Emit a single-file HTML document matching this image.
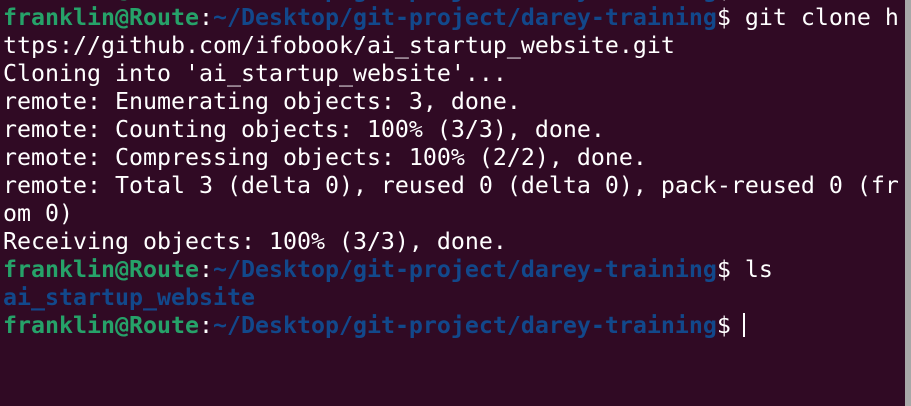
<!DOCTYPE html>
<html><head><style>
html,body{margin:0;padding:0;background:#300a24;width:911px;height:406px;overflow:hidden}
pre{position:absolute;left:3px;top:-24px;margin:0;font-family:"DejaVu Sans Mono",monospace;font-size:23.25px;line-height:28px;color:#ffffff;white-space:pre}
.g{color:#26a269;font-weight:bold}.b{color:#12488b;font-weight:bold}
.sb{position:absolute;right:0;top:0;width:6px;height:406px;background:#a8a8a8}
.cur{display:inline-block;width:2px;height:24px;background:#fff;vertical-align:-4px;margin-left:-2px}
</style></head><body>
<pre><span class="g">franklin@Route</span>:<span class="b">~/Desktop/git-project/darey-training</span>$ cd ..
<span class="g">franklin@Route</span>:<span class="b">~/Desktop/git-project/darey-training</span>$ git clone h
ttps://github.com/ifobook/ai_startup_website.git
Cloning into 'ai_startup_website'...
remote: Enumerating objects: 3, done.
remote: Counting objects: 100% (3/3), done.
remote: Compressing objects: 100% (2/2), done.
remote: Total 3 (delta 0), reused 0 (delta 0), pack-reused 0 (fr
om 0)
Receiving objects: 100% (3/3), done.
<span class="g">franklin@Route</span>:<span class="b">~/Desktop/git-project/darey-training</span>$ ls
<span class="b">ai_startup_website</span>
<span class="g">franklin@Route</span>:<span class="b">~/Desktop/git-project/darey-training</span>$ <span class="cur"></span></pre>
<div class="sb"></div>
</body></html>
